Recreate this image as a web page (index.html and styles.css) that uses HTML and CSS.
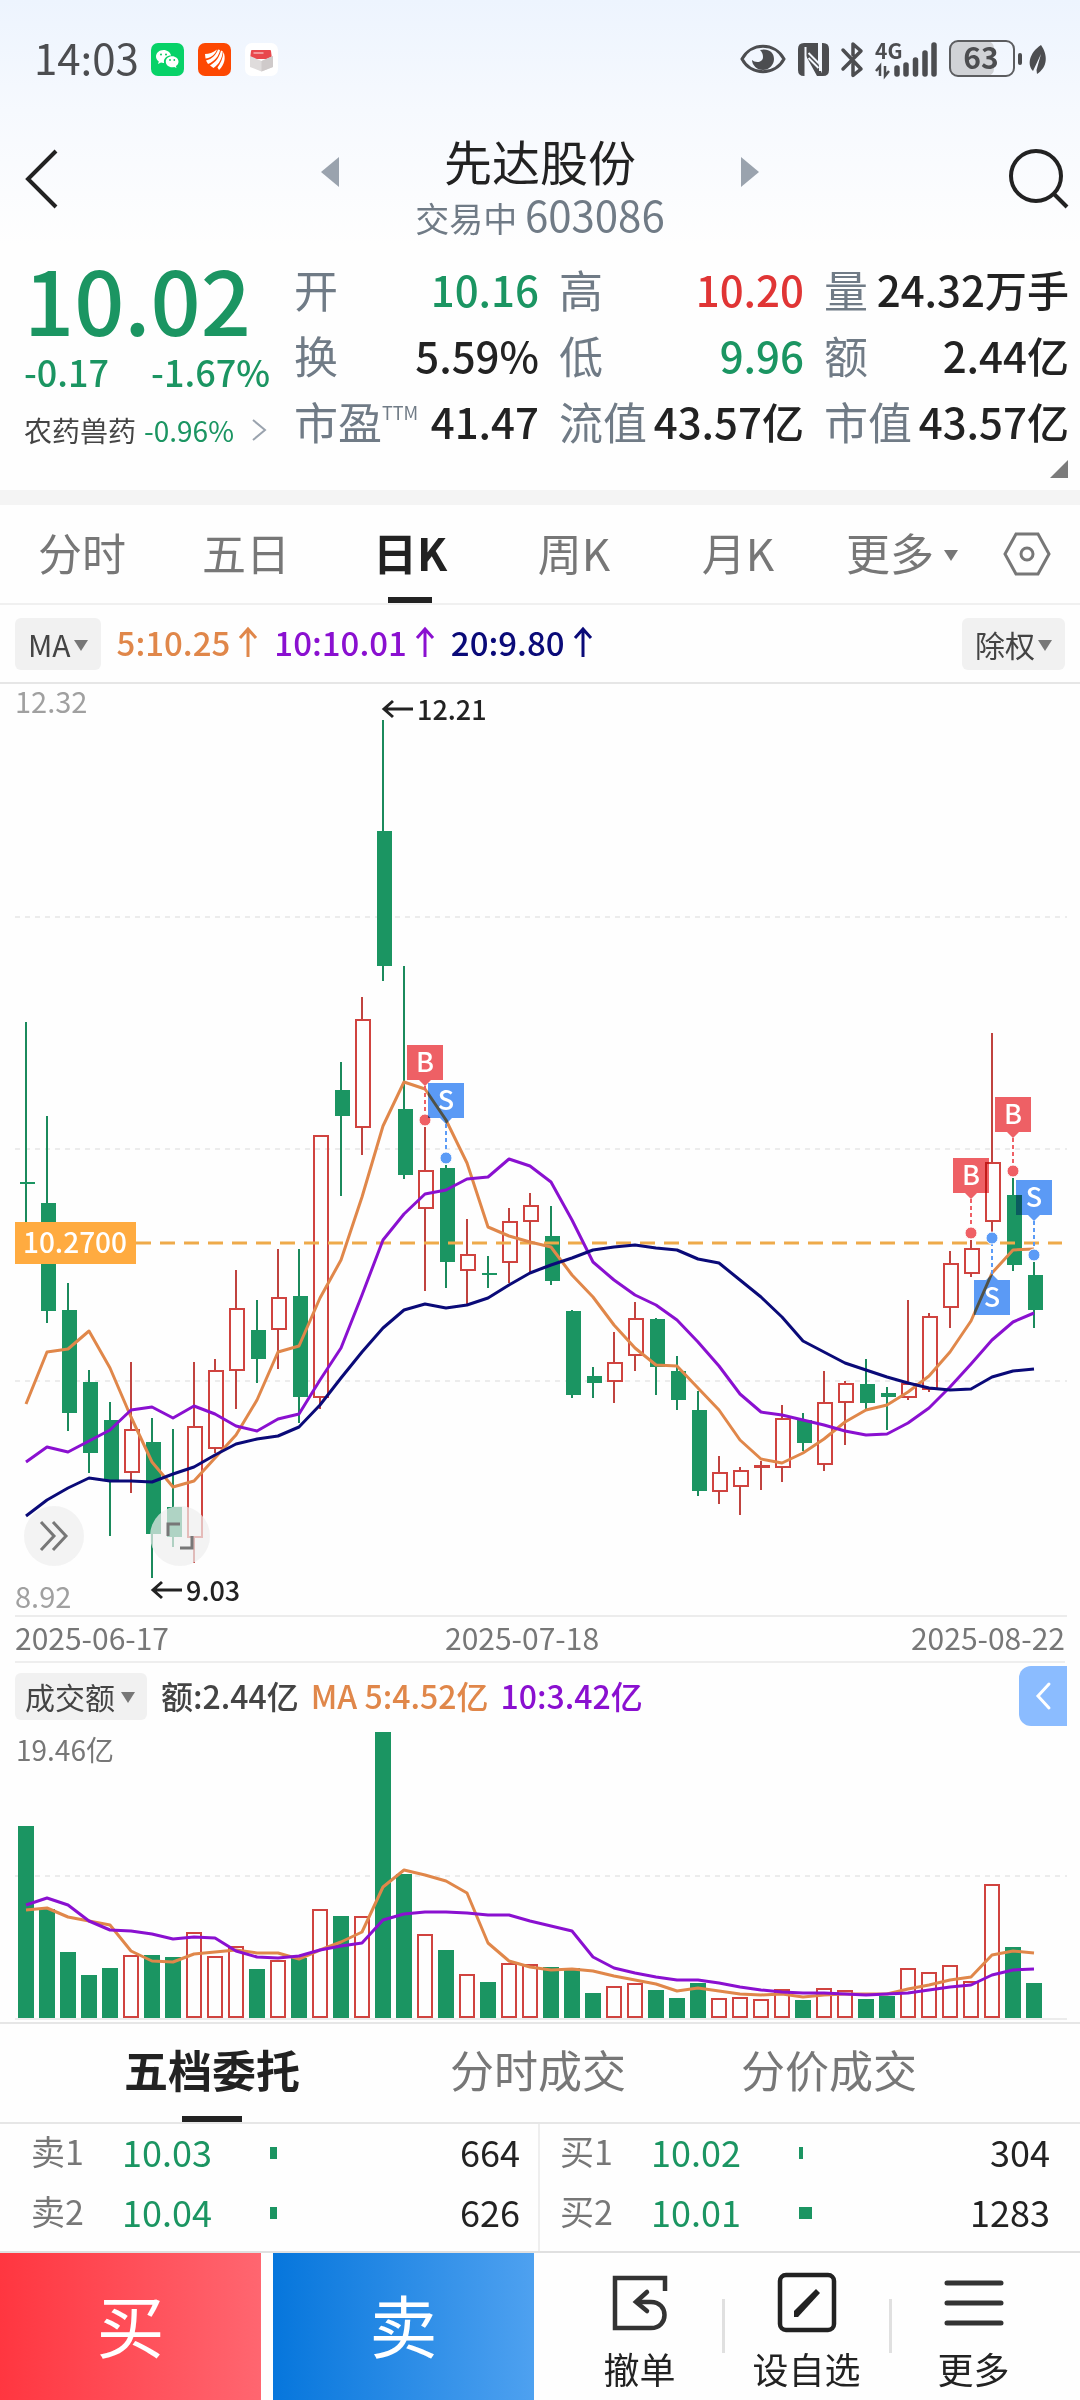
FILE: index.html
```html
<!DOCTYPE html>
<html lang="zh-CN">
<head>
    <meta charset="UTF-8">
    <meta name="viewport" content="width=device-width, initial-scale=1.0">
    <title>先达股份 603086</title>
    <link rel="stylesheet" href="styles.css">
</head>
<body>
    <div class="top">
        <div class="status-bar">
            <span class="time">14:03</span>
            <div class="app-icons">
                <svg width="33" height="33" viewBox="0 0 33 33">
                    <rect width="33" height="33" rx="7" fill="#07d268"/>
                    <path d="M12.500 7C8.400 7 5 9.900 5 13.500c0 2 1.100 3.800 2.800 5L7 21l3-1.500c.8.200 1.600.4 2.500.4h.6c-.1-.5-.2-1-.2-1.500 0-3.300 3.200-6 7-6h.2C19.300 9.300 16.200 7 12.500 7z" fill="#fff"/>
                    <path d="M27.500 18.700c0-3-2.900-5.400-6.400-5.400s-6.300 2.400-6.300 5.400 2.800 5.500 6.300 5.500c.7 0 1.500-.1 2.100-.3l2.300 1.200-.6-2c1.600-1 2.600-2.600 2.600-4.400z" fill="#fff"/>
                    <g fill="#07c860"><circle cx="10" cy="11.500" r="1"/><circle cx="15" cy="11.500" r="1"/><circle cx="19" cy="17" r=".9"/><circle cx="23.300" cy="17" r=".9"/></g>
                </svg>
                <svg width="33" height="33" viewBox="0 0 33 33">
                    <rect width="33" height="33" rx="7" fill="#fd4802"/>
                    <path d="M7 11c4 0 8-1.500 12-4.500C17 12 12 15.500 7.500 15.500zM8 17.500c6-1.500 10-5.500 12-11l2 .5c-1 6-5.500 11.500-12 14zM12 22.500c6-3.500 9.500-8.500 11-15l1.700.8C24.500 15 21 21.500 15.500 25zM19.500 24.500c3-4 5.300-9 6-15.500 2.500 6 1 12.500-4.500 18z" fill="#fff"/>
                </svg>
                <svg width="33" height="33" viewBox="0 0 33 33">
                    <rect width="33" height="33" rx="7" fill="#fff"/>
                    <path d="M6 8q0-1 1-1h18q1 0 1 1l1 8H5z" fill="#e8484d"/>
                    <path d="M5 13l11.500 5L28 13v11l-11.500 4.500L5 24z" fill="#dfdcdc"/>
                    <path d="M16.500 18L28 13v11l-11.500 4.500z" fill="#cfcaca"/>
                    <path d="M8.500 10h10" stroke="#f7b0b2" stroke-width="1.500"/>
                </svg>
            </div>
            <div class="sys-icons">
                <svg width="46" height="32" viewBox="0 0 46 32">
                    <path d="M2 16C11-1 35-1 44 16 35 33 11 33 2 16z" fill="none" stroke="#4c4d50" stroke-width="3"/>
                    <path d="M20 7c8-2 14 2 14 9 0 6-5 11-11 11s-11-5-11-10c3 3 11 3 11-3 0-3-1-5-3-7z" fill="#4c4d50"/>
                </svg>
                <svg width="31" height="33" viewBox="0 0 31 33">
                    <path d="M6 0h6l13 33h-6L7 11v22H6q-6 0-6-6V6q0-6 6-6z" fill="#4c4d50"/>
                    <path d="M25 33h-1V0h1q6 0 6 6v21q0 6-6 6z" fill="#4c4d50"/>
                    <path d="M10 0h10v20L10 5z" fill="#4c4d50"/>
                    <path d="M10.500 10l10 10M10.500 15l10 10" stroke="#f3f7fd" stroke-width="2"/>
                    <path d="M7.500 4v29M22 0v28" stroke="#f3f7fd" stroke-width="2"/>
                </svg>
                <svg width="22" height="35" viewBox="0 0 22 35">
                    <path d="M2 8l18 19-8 6.500V22M2 27L20 9l-8-7v11" fill="none" stroke="#4c4d50" stroke-width="3.500" stroke-linecap="round" stroke-linejoin="round"/>
                </svg>
                <svg width="62" height="36" viewBox="0 0 62 36">
                    <text x="0" y="18" font-size="21" font-weight="700" fill="#4c4d50">4G</text>
                    <path d="M5 35V25l-4 5M10 25v10l4-5" fill="none" stroke="#4c4d50" stroke-width="2.500"/>
                    <path d="M22 27v6M31 24v9M40.500 19v14M50 12v21M59 4v29" stroke="#4c4d50" stroke-width="5.500" stroke-linecap="round"/>
                </svg>
                <svg width="74" height="38" viewBox="0 0 74 38">
                    <rect x="1" y="1" width="44" height="35" rx="7" fill="#d0d2d6"/>
                    <rect x="1" y="1" width="64" height="35" rx="8" fill="none" stroke="#5c5d60" stroke-width="2"/>
                    <rect x="69" y="13" width="4" height="12" rx="2" fill="#4c4d50"/>
                    <text x="32" y="29" font-size="30" font-weight="700" text-anchor="middle" fill="#4c4d50">63</text>
                </svg>
                <svg width="17" height="29" viewBox="0 0 17 29">
                    <path d="M12 0c7 10 7 22-4 29l-.5-4L12 9 4 26C-2 20 0 8 12 0z" fill="#4c4d50"/>
                </svg>
            </div>
        </div>

        <header class="nav">
            <button class="icon-btn back" aria-label="返回">
                <svg width="34" height="60" viewBox="0 0 34 60"><path d="M32 2L4 30l28 28" fill="none" stroke="#222" stroke-width="4"/></svg>
            </button>
            <div class="switcher">
                <button class="arrow-btn" aria-label="上一只"><svg width="18" height="30" viewBox="0 0 18 30"><path d="M18 0v30L0 15z" fill="#9aa3ae"/></svg></button>
                <div class="title">
                    <h1>先达股份</h1>
                    <p>交易中 <span>603086</span></p>
                </div>
                <button class="arrow-btn" aria-label="下一只"><svg width="18" height="30" viewBox="0 0 18 30"><path d="M0 0v30l18-15z" fill="#9aa3ae"/></svg></button>
            </div>
            <button class="icon-btn" aria-label="搜索">
                <svg width="62" height="62" viewBox="0 0 62 62"><circle cx="28" cy="28" r="25" fill="none" stroke="#222" stroke-width="4"/><path d="M46 46l13 13" stroke="#222" stroke-width="4"/></svg>
            </button>
        </header>
    </div>

    <section class="quote">
        <div class="price-box">
            <div class="price">10.02</div>
            <div class="change"><span>-0.17</span><span>-1.67%</span></div>
            <a class="sector" href="#">农药兽药 <span>-0.96%</span>
                <svg width="14" height="22" viewBox="0 0 14 22"><path d="M1 1l12 10L1 21" fill="none" stroke="#9aa3ae" stroke-width="2"/></svg>
            </a>
        </div>
        <dl class="stats">
            <div><dt>开</dt><dd class="green">10.16</dd></div>
            <div><dt>高</dt><dd class="red">10.20</dd></div>
            <div><dt>量</dt><dd>24.32万手</dd></div>
            <div><dt>换</dt><dd>5.59%</dd></div>
            <div><dt>低</dt><dd class="green">9.96</dd></div>
            <div><dt>额</dt><dd>2.44亿</dd></div>
            <div><dt>市盈<sup>TTM</sup></dt><dd>41.47</dd></div>
            <div><dt>流值</dt><dd>43.57亿</dd></div>
            <div><dt>市值</dt><dd>43.57亿</dd></div>
        </dl>
        <span class="corner"></span>
    </section>

    <nav class="tabs">
        <a href="#">分时</a>
        <a href="#">五日</a>
        <a href="#" class="active">日K</a>
        <a href="#">周K</a>
        <a href="#">月K</a>
        <a href="#">更多<i class="caret"></i></a>
        <button class="settings" aria-label="设置">
            <svg width="48" height="44" viewBox="0 0 48 44" fill="none" stroke="#777" stroke-width="3"><path d="M13 2h22l11 20-11 20H13L2 22z"/><circle cx="24" cy="22" r="6"/></svg>
        </button>
    </nav>

    <div class="ma-bar">
        <button class="chip">MA<i class="caret"></i></button>
        <span class="ma ma5">5:10.25<svg width="20" height="30" viewBox="0 0 20 30"><path d="M10 30V2M2 11l8-9 8 9"/></svg></span>
        <span class="ma ma10">10:10.01<svg width="20" height="30" viewBox="0 0 20 30"><path d="M10 30V2M2 11l8-9 8 9"/></svg></span>
        <span class="ma ma20">20:9.80<svg width="20" height="30" viewBox="0 0 20 30"><path d="M10 30V2M2 11l8-9 8 9"/></svg></span>
        <button class="chip right">除权<i class="caret"></i></button>
    </div>

    <section class="kline">
        <svg id="kline" viewBox="0 684 1080 933"></svg>
        <div class="chart-tools">
            <button aria-label="展开"><svg width="30" height="30" viewBox="0 0 30 30"><path d="M2 1l13 14L2 29M14 1l13 14-13 14"/></svg></button>
            <button aria-label="全屏"><svg width="30" height="30" viewBox="0 0 30 30"><path d="M15 3H3v12M15 27h12V15"/></svg></button>
        </div>
        <div class="dates"><span>2025-06-17</span><span>2025-07-18</span><span>2025-08-22</span></div>
    </section>

    <section class="volume">
        <div class="vol-bar">
            <button class="chip">成交额<i class="caret"></i></button>
            <span class="amount">额:2.44亿</span>
            <span class="ma5">MA 5:4.52亿</span>
            <span class="ma10">10:3.42亿</span>
            <button class="drawer" aria-label="收起"><svg width="16" height="28" viewBox="0 0 16 28"><path d="M14 2L3 14l11 12" fill="none" stroke="#fff" stroke-width="3" stroke-linecap="round"/></svg></button>
        </div>
        <svg id="volume" viewBox="0 1729 1080 293"></svg>
    </section>

    <nav class="sub-tabs">
        <a href="#" class="active">五档委托</a>
        <a href="#">分时成交</a>
        <a href="#">分价成交</a>
    </nav>

    <div class="orders">
        <div class="asks">
            <table>
                <tr><th>卖1</th><td class="p">10.03</td><td><i class="bar" style="width: 7px"></i></td><td class="n">664</td></tr>
                <tr><th>卖2</th><td class="p">10.04</td><td><i class="bar" style="width: 7px"></i></td><td class="n">626</td></tr>
            </table>
        </div>
        <div class="bids">
            <table>
                <tr><th>买1</th><td class="p">10.02</td><td><i class="bar" style="width: 4px"></i></td><td class="n">304</td></tr>
                <tr><th>买2</th><td class="p">10.01</td><td><i class="bar" style="width: 13px"></i></td><td class="n">1283</td></tr>
            </table>
        </div>
    </div>

    <footer class="actions">
        <button class="buy">买</button>
        <button class="sell">卖</button>
        <div class="menu">
            <button>
                <svg width="60" height="60" viewBox="0 0 60 60" fill="none" stroke="#333" stroke-width="4.500"><path d="M55 19V6H5v50h36c18 0 18-26 0-26H26"/><path d="M37 20L26 30l11 9" stroke-linecap="round"/></svg>
                撤单
            </button>
            <button>
                <svg width="60" height="60" viewBox="0 0 60 60"><rect x="3" y="3" width="54" height="55" rx="6" fill="none" stroke="#222" stroke-width="4.500"/><path d="M17 45v-6l22-22 4 4-22 24z" fill="#222"/></svg>
                设自选
            </button>
            <button>
                <svg width="60" height="60" viewBox="0 0 60 60"><path d="M3 11h54M3 31h54M3 51h54" stroke="#333" stroke-width="5" stroke-linecap="round"/></svg>
                更多
            </button>
        </div>
    </footer>

    <script src="chart.js"></script>
</body>
</html>
```
FILE: styles.css
```css
* {
    box-sizing: border-box;
}
body {
    margin: 0;
    font-family: 'Noto Sans CJK SC', 'Noto Sans', sans-serif;
    background-color: #fefefe;
    color: #222;
}
button {
    font-family: inherit;
    color: inherit;
    background: none;
    border: none;
    padding: 0;
    cursor: pointer;
}
a {
    color: inherit;
    text-decoration: none;
}
h1, p, dl, dd {
    margin: 0;
}
svg {
    display: block;
    flex-shrink: 0;
    overflow: visible;
}
svg text {
    font-family: 'Noto Sans CJK SC', 'Noto Sans', sans-serif;
}
.green {
    color: #1b9562;
}
.red {
    color: #e03535;
}
.caret {
    display: inline-block;
    border: 7px solid transparent;
    border-top: 11px solid #777;
    border-bottom: none;
}

/* top */
.top {
    background: linear-gradient(#edf4fe, #f6f9fe 45%, #fefefe);
}
.status-bar {
    display: flex;
    align-items: center;
    height: 118px;
    padding: 0 34px;
}
.time {
    font-size: 42px;
    line-height: 60px;
    padding-bottom: 4px;
    color: #4c4d50;
}
.app-icons {
    display: flex;
    gap: 14px;
    margin-left: 12px;
}
.sys-icons {
    display: flex;
    align-items: center;
    gap: 12px;
    margin-left: auto;
}
.sys-icons svg:last-child {
    margin-left: -6px;
}
.nav {
    display: flex;
    justify-content: space-between;
    align-items: flex-start;
    padding: 15px 10px 0 24px;
    height: 127px;
}
.icon-btn {
    display: flex;
    align-items: center;
    justify-content: flex-end;
    height: 92px;
    width: 62px;
}
.back {
    justify-content: flex-start;
    width: 48px;
}
.switcher {
    display: flex;
    justify-content: space-between;
    width: 438px;
}
.arrow-btn {
    display: flex;
    align-items: center;
    height: 78px;
}
.title {
    text-align: center;
}
.title h1 {
    font-size: 48px;
    font-weight: 400;
    line-height: 54px;
}
.title p {
    font-size: 34px;
    line-height: 54px;
    color: #707b86;
}
.title span {
    font-size: 42px;
}

/* quote */
.quote {
    position: relative;
    display: flex;
    gap: 24px;
    padding: 11px 11px 32px 24px;
    border-bottom: 15px solid #f4f4f4;
}
.price-box {
    width: 246px;
    color: #1b9562;
}
.price {
    font-size: 88px;
    font-weight: 500;
    line-height: 84px;
}
.change {
    display: flex;
    justify-content: space-between;
    font-size: 36px;
    font-weight: 500;
    line-height: 62px;
}
.sector {
    display: flex;
    align-items: center;
    font-size: 28px;
    line-height: 56px;
    color: #444;
}
.sector span {
    color: #1b9562;
    margin: 0 18px 0 8px;
}
.stats {
    flex: 1;
    display: grid;
    grid-template-columns: repeat(3, 1fr);
    column-gap: 20px;
    align-content: start;
    font-size: 44px;
    line-height: 66px;
}
.stats div {
    display: flex;
    justify-content: space-between;
    height: 66px;
    white-space: nowrap;
}
.stats dt {
    color: #707b86;
}
.stats dd {
    font-weight: 500;
    font-size: 42px;
}
.stats sup {
    font-size: 18px;
    line-height: 18px;
    vertical-align: 20px;
}
.corner {
    position: absolute;
    right: 12px;
    bottom: 12px;
    border-left: 18px solid transparent;
    border-bottom: 18px solid #7b7b7b;
}

/* tabs */
.tabs {
    display: grid;
    grid-template-columns: repeat(6, 1fr) 86px;
    height: 100px;
    padding-right: 10px;
    border-bottom: 2px solid #f0f0f0;
    font-size: 44px;
    line-height: 94px;
    color: #777;
}
.tabs a {
    position: relative;
    text-align: center;
    white-space: nowrap;
}
.tabs .caret {
    margin-left: 10px;
    vertical-align: 10px;
}
.tabs .active, .sub-tabs .active {
    color: #222;
    font-weight: 700;
}
.tabs .active::after, .sub-tabs .active::after {
    content: '';
    position: absolute;
    left: 50%;
    bottom: 0;
    width: 44px;
    height: 6px;
    margin-left: -22px;
    background-color: #222;
}
.settings {
    display: flex;
    align-items: center;
    justify-content: center;
}

/* moving averages */
.ma-bar, .vol-bar {
    display: flex;
    align-items: center;
    padding: 0 15px;
}
.ma-bar {
    height: 79px;
    border-bottom: 2px solid #e6e6e6;
    gap: 16px;
}
.chip {
    height: 52px;
    padding: 0 13px;
    border-radius: 6px;
    background-color: #f1f1f1;
    color: #444;
    font-size: 30px;
    line-height: 48px;
}
.chip .caret {
    margin-left: 3px;
    vertical-align: 6px;
}
.chip.right {
    margin-left: auto;
}
.ma {
    display: flex;
    align-items: center;
    gap: 8px;
    padding-bottom: 3px;
    font-size: 33px;
    font-weight: 500;
}
.ma svg {
    fill: none;
    stroke: currentColor;
    stroke-width: 3;
}
.ma5 {
    color: #e0874a;
}
.ma10 {
    color: #8a10d0;
}
.ma20 {
    color: #0a0a78;
}

/* kline */
.kline {
    position: relative;
}
.kline > svg, .volume > svg {
    width: 100%;
    height: auto;
}
.chart-tools {
    position: absolute;
    left: 24px;
    bottom: 97px;
    display: flex;
    gap: 66px;
}
.chart-tools button {
    display: flex;
    align-items: center;
    justify-content: center;
    width: 60px;
    height: 60px;
    border-radius: 50%;
    background-color: rgba(238, 238, 238, 0.7);
}
.chart-tools svg {
    fill: none;
    stroke: #777;
    stroke-width: 3;
}
.dates {
    display: grid;
    grid-template-columns: 431fr 467fr auto;
    margin: 0 15px;
    height: 46px;
    line-height: 40px;
    border-bottom: 2px solid #eee;
    font-size: 30px;
    color: #777;
}
.bull {
    fill: none;
    stroke: #d0433f;
    stroke-width: 2;
}
.bear {
    fill: #1b9562;
}
.wick {
    stroke-width: 2;
}
.grid {
    stroke: #ececec;
    stroke-width: 2;
    stroke-dasharray: 5 5;
}
.axis {
    stroke: #ececec;
    stroke-width: 2;
}
.line {
    fill: none;
    stroke: currentColor;
    stroke-width: 3;
    stroke-linejoin: round;
}
.marker-box {
    mix-blend-mode: multiply;
}
.limit {
    font-size: 29px;
    fill: #a0a0a0;
}

/* volume */
.vol-bar {
    height: 66px;
    padding: 0 13px 0 15px;
    gap: 12px;
    font-size: 32px;
    font-weight: 500;
}
.vol-bar .chip {
    height: 47px;
    padding: 0 12px 0 10px;
    line-height: 43px;
}
.vol-bar .chip .caret {
    margin-left: 6px;
}
.vol-bar span {
    padding-bottom: 3px;
}
.amount {
    color: #444;
    margin-left: 2px;
}
.drawer {
    display: flex;
    align-items: center;
    justify-content: center;
    width: 48px;
    height: 60px;
    margin-left: auto;
    border-radius: 12px 0 0 12px;
    background-color: #8bbcff;
}

/* order book */
.sub-tabs {
    display: grid;
    grid-template-columns: 326fr 326fr 256fr;
    padding: 0 123px 0 49px;
    height: 102px;
    border-top: 2px solid #e6e6e6;
    border-bottom: 2px solid #e6e6e6;
    font-size: 44px;
    line-height: 90px;
    text-align: center;
    color: #777;
}
.sub-tabs a {
    position: relative;
}
.sub-tabs .active::after {
    width: 60px;
    margin-left: -30px;
}
.orders {
    display: grid;
    grid-template-columns: 1fr 1fr;
    height: 127px;
}
.asks {
    border-right: 2px solid #eee;
}
.orders table {
    width: 100%;
    border-collapse: collapse;
    table-layout: fixed;
}
.orders th, .orders td {
    height: 60px;
    padding: 0;
    font-size: 36px;
    font-weight: 400;
    line-height: 54px;
    text-align: left;
    vertical-align: top;
}
.orders th {
    width: 122px;
    padding-left: 31px;
    font-size: 34px;
    color: #777;
}
.orders .p {
    width: 148px;
    color: #1b9562;
}
.bids th {
    width: 111px;
    padding-left: 20px;
}
.orders .n {
    text-align: right;
    padding-right: 18px;
}
.bids .n {
    padding-right: 30px;
}
.bar {
    display: block;
    height: 12px;
    margin-top: 23px;
    background-color: #1b9562;
}

/* bottom bar */
.actions {
    display: flex;
    height: 149px;
    border-top: 2px solid #e0e0e0;
}
.buy, .sell {
    width: 261px;
    padding-bottom: 6px;
    font-size: 68px;
    color: #fff;
}
.buy {
    margin-right: 12px;
    background: linear-gradient(90deg, #ff3640, #ff6670);
}
.sell {
    background: linear-gradient(90deg, #0676dc, #4ea1f0);
}
.menu {
    flex: 1;
    display: flex;
    padding: 0 23px 0 22px;
}
.menu button {
    position: relative;
    flex: 1;
    display: flex;
    flex-direction: column;
    align-items: center;
    padding-top: 19px;
    font-size: 36px;
    line-height: 72px;
    white-space: nowrap;
}
.menu button + button::before {
    content: '';
    position: absolute;
    left: -1px;
    top: 46px;
    width: 3px;
    height: 54px;
    background-color: #e0e0e0;
}
```
FILE: chart.js
```js
// [up, high, body top, body bottom, low, volume top]
const days = [
    [0, 1022, 1182, 1184, 1230, 1826], [0, 1116, 1203, 1311, 1323, 1909], [0, 1283, 1310, 1413, 1431, 1952],
    [0, 1370, 1382, 1453, 1473, 1975], [0, 1402, 1420, 1480, 1536, 1968], [1, 1362, 1430, 1472, 1493, 1956],
    [0, 1418, 1442, 1534, 1578, 1955], [0, 1429, 1507, 1537, 1547, 1957], [1, 1362, 1427, 1537, 1563, 1933],
    [1, 1359, 1371, 1448, 1453, 1957], [1, 1270, 1309, 1370, 1409, 1947], [0, 1300, 1330, 1359, 1383, 1969],
    [1, 1249, 1298, 1329, 1369, 1961], [0, 1249, 1296, 1397, 1423, 1958], [1, 1135, 1136, 1397, 1409, 1910],
    [0, 1062, 1090, 1116, 1196, 1916], [1, 997, 1020, 1127, 1155, 1917], [0, 720, 831, 966, 981, 1732],
    [0, 966, 1109, 1175, 1179, 1874], [1, 1127, 1171, 1208, 1291, 1935], [0, 1165, 1168, 1262, 1288, 1950],
    [1, 1219, 1255, 1270, 1305, 1975], [0, 1256, 1273, 1275, 1288, 1982], [1, 1208, 1222, 1262, 1283, 1964],
    [1, 1193, 1206, 1221, 1272, 1965], [0, 1206, 1236, 1281, 1285, 1967], [0, 1310, 1311, 1395, 1398, 1968],
    [0, 1367, 1376, 1383, 1398, 1993], [1, 1332, 1363, 1381, 1403, 1987], [1, 1302, 1319, 1355, 1371, 1984],
    [0, 1318, 1319, 1367, 1395, 1990], [0, 1356, 1371, 1400, 1410, 1998], [0, 1391, 1410, 1491, 1496, 1983],
    [1, 1456, 1473, 1491, 1504, 1999], [1, 1467, 1471, 1486, 1515, 1998], [1, 1461, 1466, 1466, 1490, 2000],
    [1, 1405, 1419, 1467, 1482, 1990], [0, 1413, 1420, 1443, 1451, 2000], [1, 1371, 1403, 1464, 1471, 1989],
    [1, 1381, 1384, 1402, 1445, 1991], [0, 1359, 1384, 1403, 1410, 1999], [0, 1387, 1393, 1397, 1430, 1996],
    [1, 1300, 1384, 1397, 1400, 1969], [1, 1313, 1317, 1389, 1392, 1973], [1, 1251, 1264, 1307, 1328, 1966],
    [1, 1240, 1249, 1273, 1277, 1982], [1, 1033, 1163, 1221, 1232, 1885], [0, 1178, 1195, 1265, 1271, 1947],
    [0, 1262, 1275, 1310, 1328, 1983]
];

const ma5 = [1404, 1352, 1349, 1331, 1368, 1417, 1462, 1487, 1481, 1458, 1435, 1400, 1352, 1346, 1298, 1260, 1197, 1126, 1082, 1089, 1120, 1163, 1227, 1236, 1242, 1247, 1275, 1297, 1325, 1348, 1365, 1366, 1388, 1410, 1440, 1459, 1463, 1453, 1439, 1422, 1410, 1405, 1392, 1376, 1352, 1321, 1273, 1250, 1249];
const ma10 = [1462, 1447, 1452, 1441, 1430, 1410, 1407, 1418, 1406, 1414, 1426, 1431, 1419, 1414, 1380, 1348, 1295, 1240, 1214, 1194, 1190, 1179, 1177, 1159, 1166, 1182, 1220, 1262, 1280, 1295, 1305, 1320, 1342, 1366, 1394, 1412, 1415, 1420, 1425, 1431, 1435, 1434, 1423, 1408, 1387, 1364, 1340, 1322, 1313];
const ma20 = [1516, 1500, 1488, 1478, 1481, 1481, 1482, 1474, 1467, 1455, 1444, 1439, 1436, 1427, 1405, 1378, 1352, 1328, 1310, 1304, 1308, 1305, 1298, 1285, 1273, 1265, 1258, 1250, 1247, 1245, 1248, 1250, 1259, 1263, 1280, 1297, 1317, 1341, 1352, 1363, 1370, 1377, 1383, 1388, 1390, 1389, 1377, 1371, 1369];
const vol5 = [1910, 1908, 1917, 1921, 1925, 1951, 1961, 1962, 1954, 1952, 1950, 1953, 1953, 1959, 1950, 1942, 1932, 1887, 1870, 1875, 1881, 1893, 1943, 1961, 1967, 1970, 1969, 1971, 1976, 1980, 1984, 1991, 1988, 1991, 1994, 1995, 1994, 1997, 1995, 1994, 1994, 1994, 1989, 1985, 1980, 1977, 1955, 1951, 1953];
const vol10 = [1905, 1898, 1905, 1921, 1930, 1931, 1934, 1939, 1937, 1938, 1951, 1957, 1958, 1956, 1950, 1946, 1943, 1920, 1914, 1912, 1912, 1913, 1915, 1915, 1921, 1926, 1931, 1957, 1968, 1973, 1977, 1980, 1980, 1983, 1987, 1990, 1992, 1993, 1993, 1994, 1995, 1994, 1993, 1990, 1987, 1985, 1975, 1970, 1969];

// trades: [day, letter, box top, dot y]
const trades = [
    [19, 'B', 1045, 1120], [20, 'S', 1083, 1158], [45, 'B', 1158, 1233],
    [46, 'S', 1280, 1238], [47, 'B', 1097, 1171], [48, 'S', 1180, 1255]
];

const x = i => 26 + i * 21;

function hline(y, cls) {
    return `<line class="${cls}" x1="15" x2="1067" y1="${y}" y2="${y}"/>`;
}

function curve(values, cls) {
    const points = values.map((y, i) => `${x(i)},${y}`).join(' ');
    return `<polyline class="line ${cls}" points="${points}"/>`;
}

function candle(d, i) {
    const [up, high, top, bottom, low] = d;
    const color = up ? '#c0433f' : '#1b8a5c';
    const wick = (a, b) => `<line class="wick" stroke="${color}" x1="${x(i)}" x2="${x(i)}" y1="${a}" y2="${b}"/>`;
    const body = up
        ? `<rect class="bull" x="${x(i) - 6}" y="${top}" width="14" height="${Math.max(bottom - top, 1)}"/>`
        : `<rect class="bear" x="${x(i) - 6}" y="${top}" width="15" height="${bottom - top}"/>`;
    return wick(high, top) + body + wick(bottom, low);
}

function volumeBar(d, i) {
    const top = d[5];
    return d[0]
        ? `<rect class="bull" x="${x(i) - 7}" y="${top}" width="14" height="${2017 - top}"/>`
        : `<rect class="bear" x="${x(i) - 8}" y="${top}" width="16" height="${2018 - top}"/>`;
}

function marker([day, letter, top, dot]) {
    const cx = x(day);
    const color = letter === 'B' ? '#ef6065' : '#5b9bf6';
    const below = top > dot;
    const tip = below ? `M${cx - 6} ${top}l6 -6l6 6z` : `M${cx - 6} ${top + 35}l6 6l6 -6z`;
    const end = below ? top - 6 : top + 41;
    return `<line x1="${cx}" x2="${cx}" y1="${end}" y2="${dot}" stroke="${color}" stroke-width="2" stroke-dasharray="4 3"/>
        <circle cx="${cx}" cy="${dot}" r="6" fill="${color}" stroke="#fff"/>
        <path class="marker-box" d="M${cx - 18} ${top}h36v35h-36z${tip}" fill="${color}"/>
        <text x="${cx}" y="${top + 27}" font-size="27" font-weight="500" text-anchor="middle" fill="#fff">${letter}</text>`;
}

function note(ax, y, text) {
    return `<path d="M${ax + 30} ${y}H${ax + 2}M${ax + 10} ${y - 8}l-9 8l9 8" fill="none" stroke="#222" stroke-width="3"/>
        <text x="${ax + 34}" y="${y + 11}" font-size="27" font-weight="500" fill="#222">${text}</text>`;
}

document.getElementById('kline').innerHTML =
    hline(917, 'grid') + hline(1149, 'grid') + hline(1381, 'grid') + hline(1616, 'axis') +
    days.map(candle).join('') +
    '<line x1="136" x2="1062" y1="1243" y2="1243" stroke="#eeaa4a" stroke-width="3" stroke-dasharray="15 9"/>' +
    curve(ma5, 'ma5') + curve(ma10, 'ma10') + curve(ma20, 'ma20') +
    trades.map(marker).join('') +
    '<rect x="15" y="1222" width="121" height="42" fill="#ffab40"/>' +
    '<text x="75" y="1253" font-size="28" font-weight="500" text-anchor="middle" fill="#fff">10.2700</text>' +
    note(383, 709, '12.21') + note(152, 1590, '9.03') +
    '<text class="limit" x="15" y="713">12.32</text><text class="limit" x="15" y="1608">8.92</text>';

document.getElementById('volume').innerHTML =
    hline(1876, 'grid') + hline(2019, 'axis') +
    days.map(volumeBar).join('') +
    curve(vol5, 'ma5') + curve(vol10, 'ma10') +
    '<text x="16" y="1761" font-size="28" fill="#777">19.46亿</text>';
```
